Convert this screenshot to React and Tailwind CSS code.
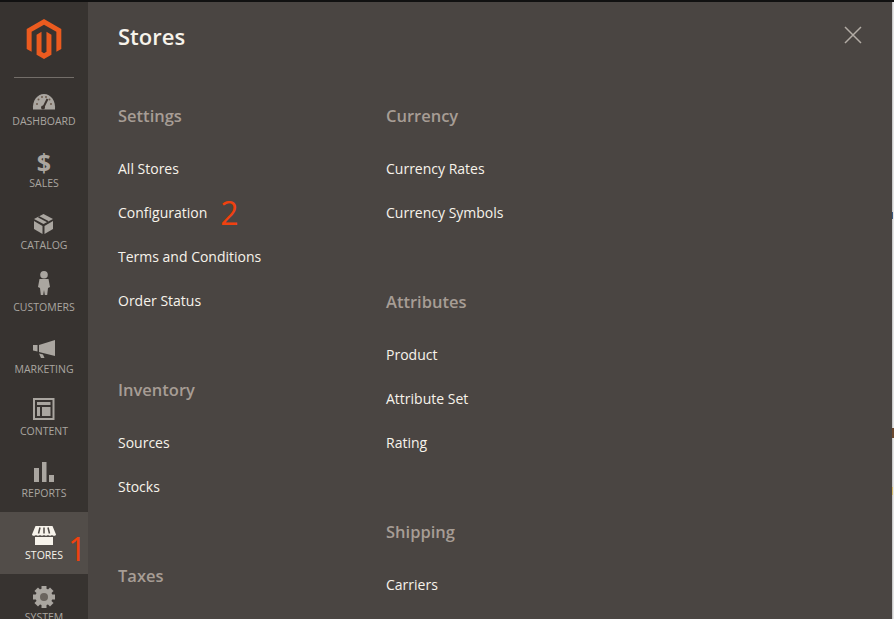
import React from "react";

const font = { fontFamily: '"Open Sans", sans-serif' };

const Svg = ({ children, color = "#aaa6a0" }) => (
  <svg width="32" height="24" viewBox="0 0 32 24" fill={color} className="overflow-visible block">
    {children}
  </svg>
);

const D = "#373330";

const Gauge = () => (
  <Svg>
    <path d="M5 21.5C4.2 13 9 6 16 6s11.8 7 11 15.5z" />
    <path d="M15 20l4.5-9" stroke="#3d3530" strokeWidth="2" />
    <circle cx="15" cy="19.5" r="2" fill="#3d3530" />
    <g fill="#6b5a4c">
      <circle cx="9" cy="16" r="1" />
      <circle cx="10.5" cy="11.5" r="1" />
      <circle cx="14" cy="9" r="1" />
      <circle cx="18" cy="9" r="1" />
      <circle cx="23" cy="16" r="1" />
      <circle cx="21.5" cy="11.5" r="1" />
    </g>
  </Svg>
);
const Box = () => (
  <Svg>
    <path d="M15.5 2L25 7l-9.5 5L6 7z" />
    <path d="M6 9l8.5 5v8L6 17z" />
    <path d="M16.5 14L25 9v8l-8.5 5z" />
    <path d="M10.5 4.7l9.5 5" stroke={D} strokeWidth="1.6" />
  </Svg>
);
const Person = () => (
  <Svg>
    <circle cx="16" cy="0.8" r="3.8" />
    <path d="M11.5 5h9l1.5 8-2 1-.8 7h-2.4l-.8-5-.8 5h-2.4l-.8-7-2-1z" />
  </Svg>
);
const Megaphone = () => (
  <Svg>
    <path d="M11 9l16-5v16l-16-4z" />
    <path d="M5 9h4.5v6.5L5 14.5z" />
    <path d="M11 17.5l4 1 1.5 3.5-3.5 0z" />
  </Svg>
);
const Content = () => (
  <Svg>
    <rect x="6" y="1" width="19.5" height="20" fill="none" stroke="#aaa6a0" strokeWidth="2" />
    <rect x="9" y="4" width="13.5" height="3" />
    <rect x="9" y="9" width="3" height="9" />
    <rect x="14" y="9" width="8.5" height="9" />
  </Svg>
);
const Bars = () => (
  <Svg>
    <rect x="6" y="8" width="5" height="14" />
    <rect x="14" y="2" width="4.5" height="20" />
    <rect x="21" y="15" width="5" height="7" />
  </Svg>
);
const Store = () => (
  <Svg color="#f7f3eb">
    <path d="M7.5 4h17L28 12.5c0 1.6-3.2 1.6-4 .5-.8 1.1-3.2 1.1-4 0-.8 1.1-3.200 1.100-4 0-.8 1.100-3.200 1.100-4 0-.8 1.100-3.200 1.100-4 0-.8 1.100-4 1.100-4-.5z" />
    <path d="M7 15h18v8H7z" />
    <path d="M12 5.500l-1.500 6M16 5.500v6M20 5.500l1.500 6" stroke="#4f4a46" strokeWidth="1.500" />
  </Svg>
);
const Gear = () => (
  <Svg>
    {[0, 45, 90, 135, 180, 225, 270, 315].map((a) => (
      <rect key={a} x="13.500" y="2" width="5" height="5" transform={`rotate(${a} 16 13)`} />
    ))}
    <circle cx="16" cy="13" r="8.500" />
    <circle cx="16" cy="13" r="4" fill="#6a645e" />
  </Svg>
);
const Logo = () => (
  <svg width="40" height="40" viewBox="0 0 24 24" fill="#eb5b1f" className="block">
    <path d="M12 24l-4.455-2.572v-12l2.97-1.715v12.001l1.485.902 1.485-.902V7.713l2.97 1.715v12L12 24zM22.391 6v12l-2.969 1.714V7.713L12 3.43 4.574 7.713v12.001L1.609 18V6L12 0l10.391 6z" />
  </svg>
);

const items = [
  ["DASHBOARD", <Gauge />],
  ["SALES", <div className="text-[25px] font-bold leading-[24px] text-[#aaa6a0] text-center">$</div>],
  ["CATALOG", <Box />],
  ["CUSTOMERS", <Person />],
  ["MARKETING", <Megaphone />],
  ["CONTENT", <Content />],
  ["REPORTS", <Bars />],
  ["STORES", <Store />, true],
  ["SYSTEM", <Gear />],
];

const Group = ({ title, links }) => (
  <div className="mb-[55px]">
    <div className="h-[24px] leading-[24px] mb-[19px] text-[16.500px] font-semibold text-[#a79d95]">{title}</div>
    {links.map((l) => (
      <div key={l} className="h-[44px] leading-[44px] text-[14px] text-[#f7f3eb] flex items-center whitespace-nowrap">
        {l}
        {l === "Configuration" && (
          <span className="ml-[13px] text-[32px] leading-[44px] text-[#f0410f]">2</span>
        )}
      </div>
    ))}
  </div>
);

export default function App() {
  return (
    <div className="w-[894px] h-[619px] overflow-hidden flex flex-col bg-[#4a4542]" style={font}>
      <div className="h-[2px] shrink-0 bg-[#111111]" />
      <div className="flex flex-1 min-h-0">
        <aside className="w-[88px] shrink-0 bg-[#373330] flex flex-col">
          <div className="h-[76px] shrink-0 mx-[14px] border-b border-[#736e69] pt-[17px] flex justify-center">
            <Logo />
          </div>
          {items.map(([label, icon, active]) => (
            <div
              key={label}
              className={
                "relative h-[62px] shrink-0 flex flex-col items-center pt-[10px] " +
                (active ? "bg-[#524d49]" : "")
              }
            >
              <div className="h-[24px] w-[32px]">{icon}</div>
              <div
                className={
                  "mt-[2px] text-[10.500px] leading-[14px] whitespace-nowrap " +
                  (active ? "text-[#f7f3eb]" : "text-[#aaa6a0]")
                }
              >
                {label}
              </div>
              {active && (
                <span className="absolute left-[68px] top-[17px] text-[32px] leading-[40px] text-[#f0410f]">1</span>
              )}
            </div>
          ))}
        </aside>
        <main className="flex-1 min-w-0 pl-[30px] pr-[30px] overflow-hidden">
          <div className="flex justify-between items-center h-[68px] pb-[1px]">
            <h1 className="text-[22px] font-semibold leading-[30px] text-[#f7f3eb]">Stores</h1>
            <svg width="18" height="18" viewBox="0 0 18 18" className="block mb-[1px]" stroke="#b3aca5" strokeWidth="1.500" fill="none">
              <path d="M1 1l16 16M17 1L1 17" />
            </svg>
          </div>
          <div className="flex pt-[34px]">
            <div className="w-[268px] shrink-0">
              <Group title="Settings" links={["All Stores", "Configuration", "Terms and Conditions", "Order Status"]} />
              <Group title="Inventory" links={["Sources", "Stocks"]} />
              <Group title="Taxes" links={[]} />
            </div>
            <div className="w-[268px] shrink-0">
              <Group title="Currency" links={["Currency Rates", "Currency Symbols"]} />
              <Group title="Attributes" links={["Product", "Attribute Set", "Rating"]} />
              <Group title="Shipping" links={["Carriers"]} />
            </div>
          </div>
        </main>
        <div className="relative w-[2px] shrink-0 bg-[linear-gradient(to_right,#bdbdbd,#f3f3f3)]">
          <div className="absolute left-0 top-[210px] h-[7px] w-[1px] bg-[#3a5a80]" />
          <div className="absolute left-0 top-[426px] h-[10px] w-[2px] bg-[#6b4a30]" />
          <div className="absolute left-0 top-[485px] h-[8px] w-[1px] bg-[#d8c070]" />
        </div>
      </div>
    </div>
  );
}
